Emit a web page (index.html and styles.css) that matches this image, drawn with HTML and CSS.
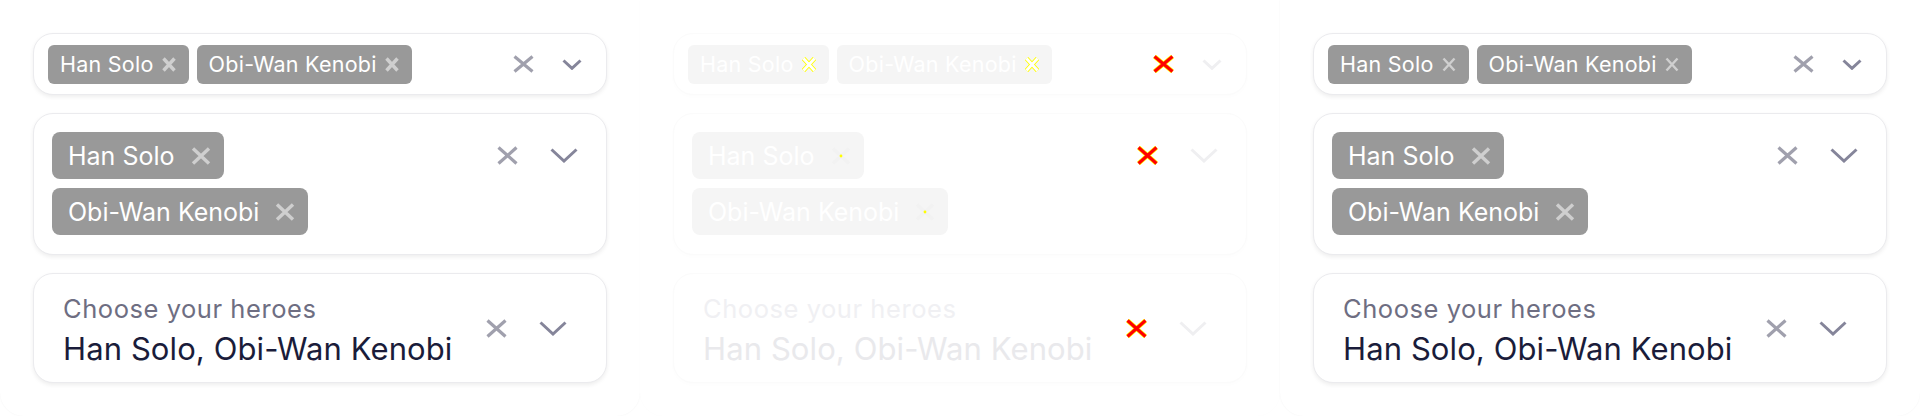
FILE: index.html
```html
<!DOCTYPE html>
<html lang="en">
<head>
<meta charset="utf-8">
<title>Multi select</title>
<link rel="stylesheet" href="styles.css">
</head>
<body>
<main class="row">
  <section class="panel">
    <div class="card card-sm">
      <div class="tags tags-sm">
        <span class="tag tag-sm">Han Solo <svg class="tx-sm" viewBox="0 0 14 15"><path d="M1.5 1.5L12.5 13.5M12.5 1.5L1.5 13.5"/></svg></span>
        <span class="tag tag-sm">Obi-Wan Kenobi <svg class="tx-sm" viewBox="0 0 14 15"><path d="M1.5 1.5L12.5 13.5M12.5 1.5L1.5 13.5"/></svg></span>
      </div>
      <div class="actions actions-sm">
        <svg class="clear clear-sm" viewBox="0 0 21 18"><path d="M1.5 1.5L19.5 16.5M19.5 1.5L1.5 16.5"/></svg>
        <svg class="chev chev-sm" viewBox="0 0 20 11"><path d="M1.5 1.5L10 9.3L18.5 1.5"/></svg>
      </div>
    </div>
    <div class="card card-md">
      <div class="tags tags-md">
        <span class="tag tag-md">Han Solo <svg class="tx-md" viewBox="0 0 20 18"><path d="M2 1.5L18 16.5M18 1.5L2 16.5"/></svg></span>
        <span class="tag tag-md">Obi-Wan Kenobi <svg class="tx-md" viewBox="0 0 20 18"><path d="M2 1.5L18 16.5M18 1.5L2 16.5"/></svg></span>
      </div>
      <div class="actions actions-md">
        <svg class="clear clear-md" viewBox="0 0 21 19"><path d="M1.5 1.5L19.5 17.5M19.5 1.5L1.5 17.5"/></svg>
        <svg class="chev chev-md" viewBox="0 0 28 15"><path d="M1.5 1.5L14 13L26.5 1.5"/></svg>
      </div>
    </div>
    <div class="card card-lg">
      <div class="field">
        <div class="label">Choose your heroes</div>
        <div class="value">Han Solo, Obi-Wan Kenobi</div>
      </div>
      <div class="actions actions-lg">
        <svg class="clear clear-md" viewBox="0 0 21 19"><path d="M1.5 1.5L19.5 17.5M19.5 1.5L1.5 17.5"/></svg>
        <svg class="chev chev-md" viewBox="0 0 28 15"><path d="M1.5 1.5L14 13L26.5 1.5"/></svg>
      </div>
    </div>
  </section>

  <section class="panel panel-off">
    <div class="card card-sm">
      <div class="tags tags-sm">
        <span class="tag tag-sm">Han Solo <svg class="tx-sm hl" viewBox="0 0 14 15"><path class="hl-out" d="M1.5 1.5L12.5 13.5M12.5 1.5L1.5 13.5"/><path class="hl-in" d="M1.5 1.5L12.5 13.5M12.5 1.5L1.5 13.5"/></svg></span>
        <span class="tag tag-sm">Obi-Wan Kenobi <svg class="tx-sm hl" viewBox="0 0 14 15"><path class="hl-out" d="M1.5 1.5L12.5 13.5M12.5 1.5L1.5 13.5"/><path class="hl-in" d="M1.5 1.5L12.5 13.5M12.5 1.5L1.5 13.5"/></svg></span>
      </div>
      <div class="actions actions-sm">
        <svg class="clear clear-sm red" viewBox="0 0 21 18"><path class="red-out" d="M1.5 1.5L19.5 16.5M19.5 1.5L1.5 16.5"/><path class="red-in" d="M1.5 1.5L19.5 16.5M19.5 1.5L1.5 16.5"/></svg>
        <svg class="chev chev-sm" viewBox="0 0 20 11"><path d="M1.5 1.5L10 9.3L18.5 1.5"/></svg>
      </div>
    </div>
    <div class="card card-md">
      <div class="tags tags-md">
        <span class="tag tag-md">Han Solo <svg class="tx-md dot" viewBox="0 0 20 18"><path d="M2 1.5L18 16.5M18 1.5L2 16.5"/><circle cx="10" cy="9" r="1.4"/></svg></span>
        <span class="tag tag-md">Obi-Wan Kenobi <svg class="tx-md dot" viewBox="0 0 20 18"><path d="M2 1.5L18 16.5M18 1.5L2 16.5"/><circle cx="10" cy="9" r="1.4"/></svg></span>
      </div>
      <div class="actions actions-md">
        <svg class="clear clear-md red" viewBox="0 0 21 19"><path class="red-out" d="M1.5 1.5L19.5 17.5M19.5 1.5L1.5 17.5"/><path class="red-in" d="M1.5 1.5L19.5 17.5M19.5 1.5L1.5 17.5"/></svg>
        <svg class="chev chev-md" viewBox="0 0 28 15"><path d="M1.5 1.5L14 13L26.5 1.5"/></svg>
      </div>
    </div>
    <div class="card card-lg">
      <div class="field">
        <div class="label">Choose your heroes</div>
        <div class="value">Han Solo, Obi-Wan Kenobi</div>
      </div>
      <div class="actions actions-lg">
        <svg class="clear clear-md red" viewBox="0 0 21 19"><path class="red-out" d="M1.5 1.5L19.5 17.5M19.5 1.5L1.5 17.5"/><path class="red-in" d="M1.5 1.5L19.5 17.5M19.5 1.5L1.5 17.5"/></svg>
        <svg class="chev chev-md" viewBox="0 0 28 15"><path d="M1.5 1.5L14 13L26.5 1.5"/></svg>
      </div>
    </div>
  </section>

  <section class="panel">
    <div class="card card-sm">
      <div class="tags tags-sm">
        <span class="tag tag-sm">Han Solo <svg class="tx-sm thin" viewBox="0 0 14 15"><path d="M1.5 1.5L12.5 13.5M12.5 1.5L1.5 13.5"/></svg></span>
        <span class="tag tag-sm">Obi-Wan Kenobi <svg class="tx-sm thin" viewBox="0 0 14 15"><path d="M1.5 1.5L12.5 13.5M12.5 1.5L1.5 13.5"/></svg></span>
      </div>
      <div class="actions actions-sm">
        <svg class="clear clear-sm" viewBox="0 0 21 18"><path d="M1.5 1.5L19.5 16.5M19.5 1.5L1.5 16.5"/></svg>
        <svg class="chev chev-sm" viewBox="0 0 20 11"><path d="M1.5 1.5L10 9.3L18.5 1.5"/></svg>
      </div>
    </div>
    <div class="card card-md">
      <div class="tags tags-md">
        <span class="tag tag-md">Han Solo <svg class="tx-md" viewBox="0 0 20 18"><path d="M2 1.5L18 16.5M18 1.5L2 16.5"/></svg></span>
        <span class="tag tag-md">Obi-Wan Kenobi <svg class="tx-md" viewBox="0 0 20 18"><path d="M2 1.5L18 16.5M18 1.5L2 16.5"/></svg></span>
      </div>
      <div class="actions actions-md">
        <svg class="clear clear-md" viewBox="0 0 21 19"><path d="M1.5 1.5L19.5 17.5M19.5 1.5L1.5 17.5"/></svg>
        <svg class="chev chev-md" viewBox="0 0 28 15"><path d="M1.5 1.5L14 13L26.5 1.5"/></svg>
      </div>
    </div>
    <div class="card card-lg">
      <div class="field">
        <div class="label">Choose your heroes</div>
        <div class="value">Han Solo, Obi-Wan Kenobi</div>
      </div>
      <div class="actions actions-lg">
        <svg class="clear clear-md" viewBox="0 0 21 19"><path d="M1.5 1.5L19.5 17.5M19.5 1.5L1.5 17.5"/></svg>
        <svg class="chev chev-md" viewBox="0 0 28 15"><path d="M1.5 1.5L14 13L26.5 1.5"/></svg>
      </div>
    </div>
  </section>
</main>
</body>
</html>
```

FILE: styles.css
```css
* { box-sizing: border-box; }

html, body {
  margin: 0;
  padding: 0;
  background: #ffffff;
  font-family: Inter, "Noto Sans", sans-serif;
  overflow: hidden;
}

.row {
  display: flex;
  width: 1920px;
  height: 416px;
}

.panel {
  width: 640px;
  flex: 0 0 640px;
  height: 416px;
  background: #ffffff;
  border-radius: 0 0 24px 24px;
  box-shadow: 0 0 2px rgba(0, 0, 0, 0.05);
  padding: 33px 33px 0 33px;
  display: flex;
  flex-direction: column;
  gap: 18px;
}

.card {
  background: #ffffff;
  border: 1px solid #ebebee;
  border-radius: 20px;
  box-shadow: 0 2px 4px rgba(0, 0, 0, 0.07);
  display: flex;
  align-items: center;
}

.card-sm { height: 62px; padding: 0 24px 0 14px; }
.card-md { height: 142px; padding: 18px 28px 18px 18px; align-items: flex-start; }
.card-lg { height: 110px; padding: 20px 39px 15px 29px; }

.tags { flex: 1; display: flex; }
.tags-sm { gap: 8px; }
.tags-md { flex-direction: column; align-items: flex-start; gap: 9px; }

.tag {
  display: inline-flex;
  align-items: center;
  background: #999999;
  color: #ffffff;
  white-space: nowrap;
}

.tag-sm {
  height: 39px;
  padding: 0 13px 0 12px;
  border-radius: 6px;
  font-size: 21.5px;
  letter-spacing: 0.25px;
  gap: 8px;
}

.tag-md {
  height: 47px;
  padding: 0 13px 0 16px;
  border-radius: 8px;
  font-size: 25px;
  gap: 16px;
}

.tag svg { fill: none; stroke: #cfcfcf; stroke-width: 3.4; }
.tx-sm { width: 14px; height: 15px; }
.tx-md { width: 20px; height: 18px; }
.tag .thin { stroke-width: 2.4; }

.actions { display: flex; align-items: center; }
.actions-sm { gap: 28px; }
.actions-md { gap: 32px; height: 47px; }
.actions-lg { gap: 32px; margin-top: -5px; }

.clear, .chev { fill: none; stroke-linecap: butt; stroke-linejoin: miter; }
.clear { stroke: #a0a0ad; stroke-width: 3.2; }
.chev { stroke: #85859a; stroke-width: 3; }
.clear-sm { width: 21px; height: 18px; }
.chev-sm { width: 20px; height: 11px; }
.clear-md { width: 21px; height: 19px; }
.chev-md { width: 28px; height: 15px; }

.field { flex: 1; display: flex; flex-direction: column; }
.label {
  font-size: 25.5px;
  letter-spacing: 0.55px;
  line-height: 30px;
  color: #6e6e82;
}
.value {
  margin-top: 6px;
  font-size: 31px;
  letter-spacing: 0.1px;
  line-height: 37px;
  color: #1a1c3a;
}

/* disabled / faded panel */
.panel-off { box-shadow: 0 0 2px rgba(0, 0, 0, 0.02); }
.panel-off .card {
  border-color: #fbfbfb;
  box-shadow: 0 2px 4px rgba(0, 0, 0, 0.012);
}
.panel-off .tag { background: #f5f5f5; }
.panel-off .label { color: #f0f0f3; }
.panel-off .value { color: #e9e9ec; }
.panel-off .chev { stroke: #efeff1; }

.panel-off .tag .hl-out { stroke: #ffff00; stroke-width: 4.6; }
.panel-off .tag .hl-in { stroke: #ffffff; stroke-width: 2.8; }
.panel-off .tag .dot { stroke: #f2f2f2; stroke-width: 3.6; }
.panel-off .tag .dot circle { fill: #ffff00; stroke: none; }

.red .red-out { stroke: #ffff00; stroke-width: 4.6; }
.red .red-in { stroke: #ff0000; stroke-width: 3.2; }
```
